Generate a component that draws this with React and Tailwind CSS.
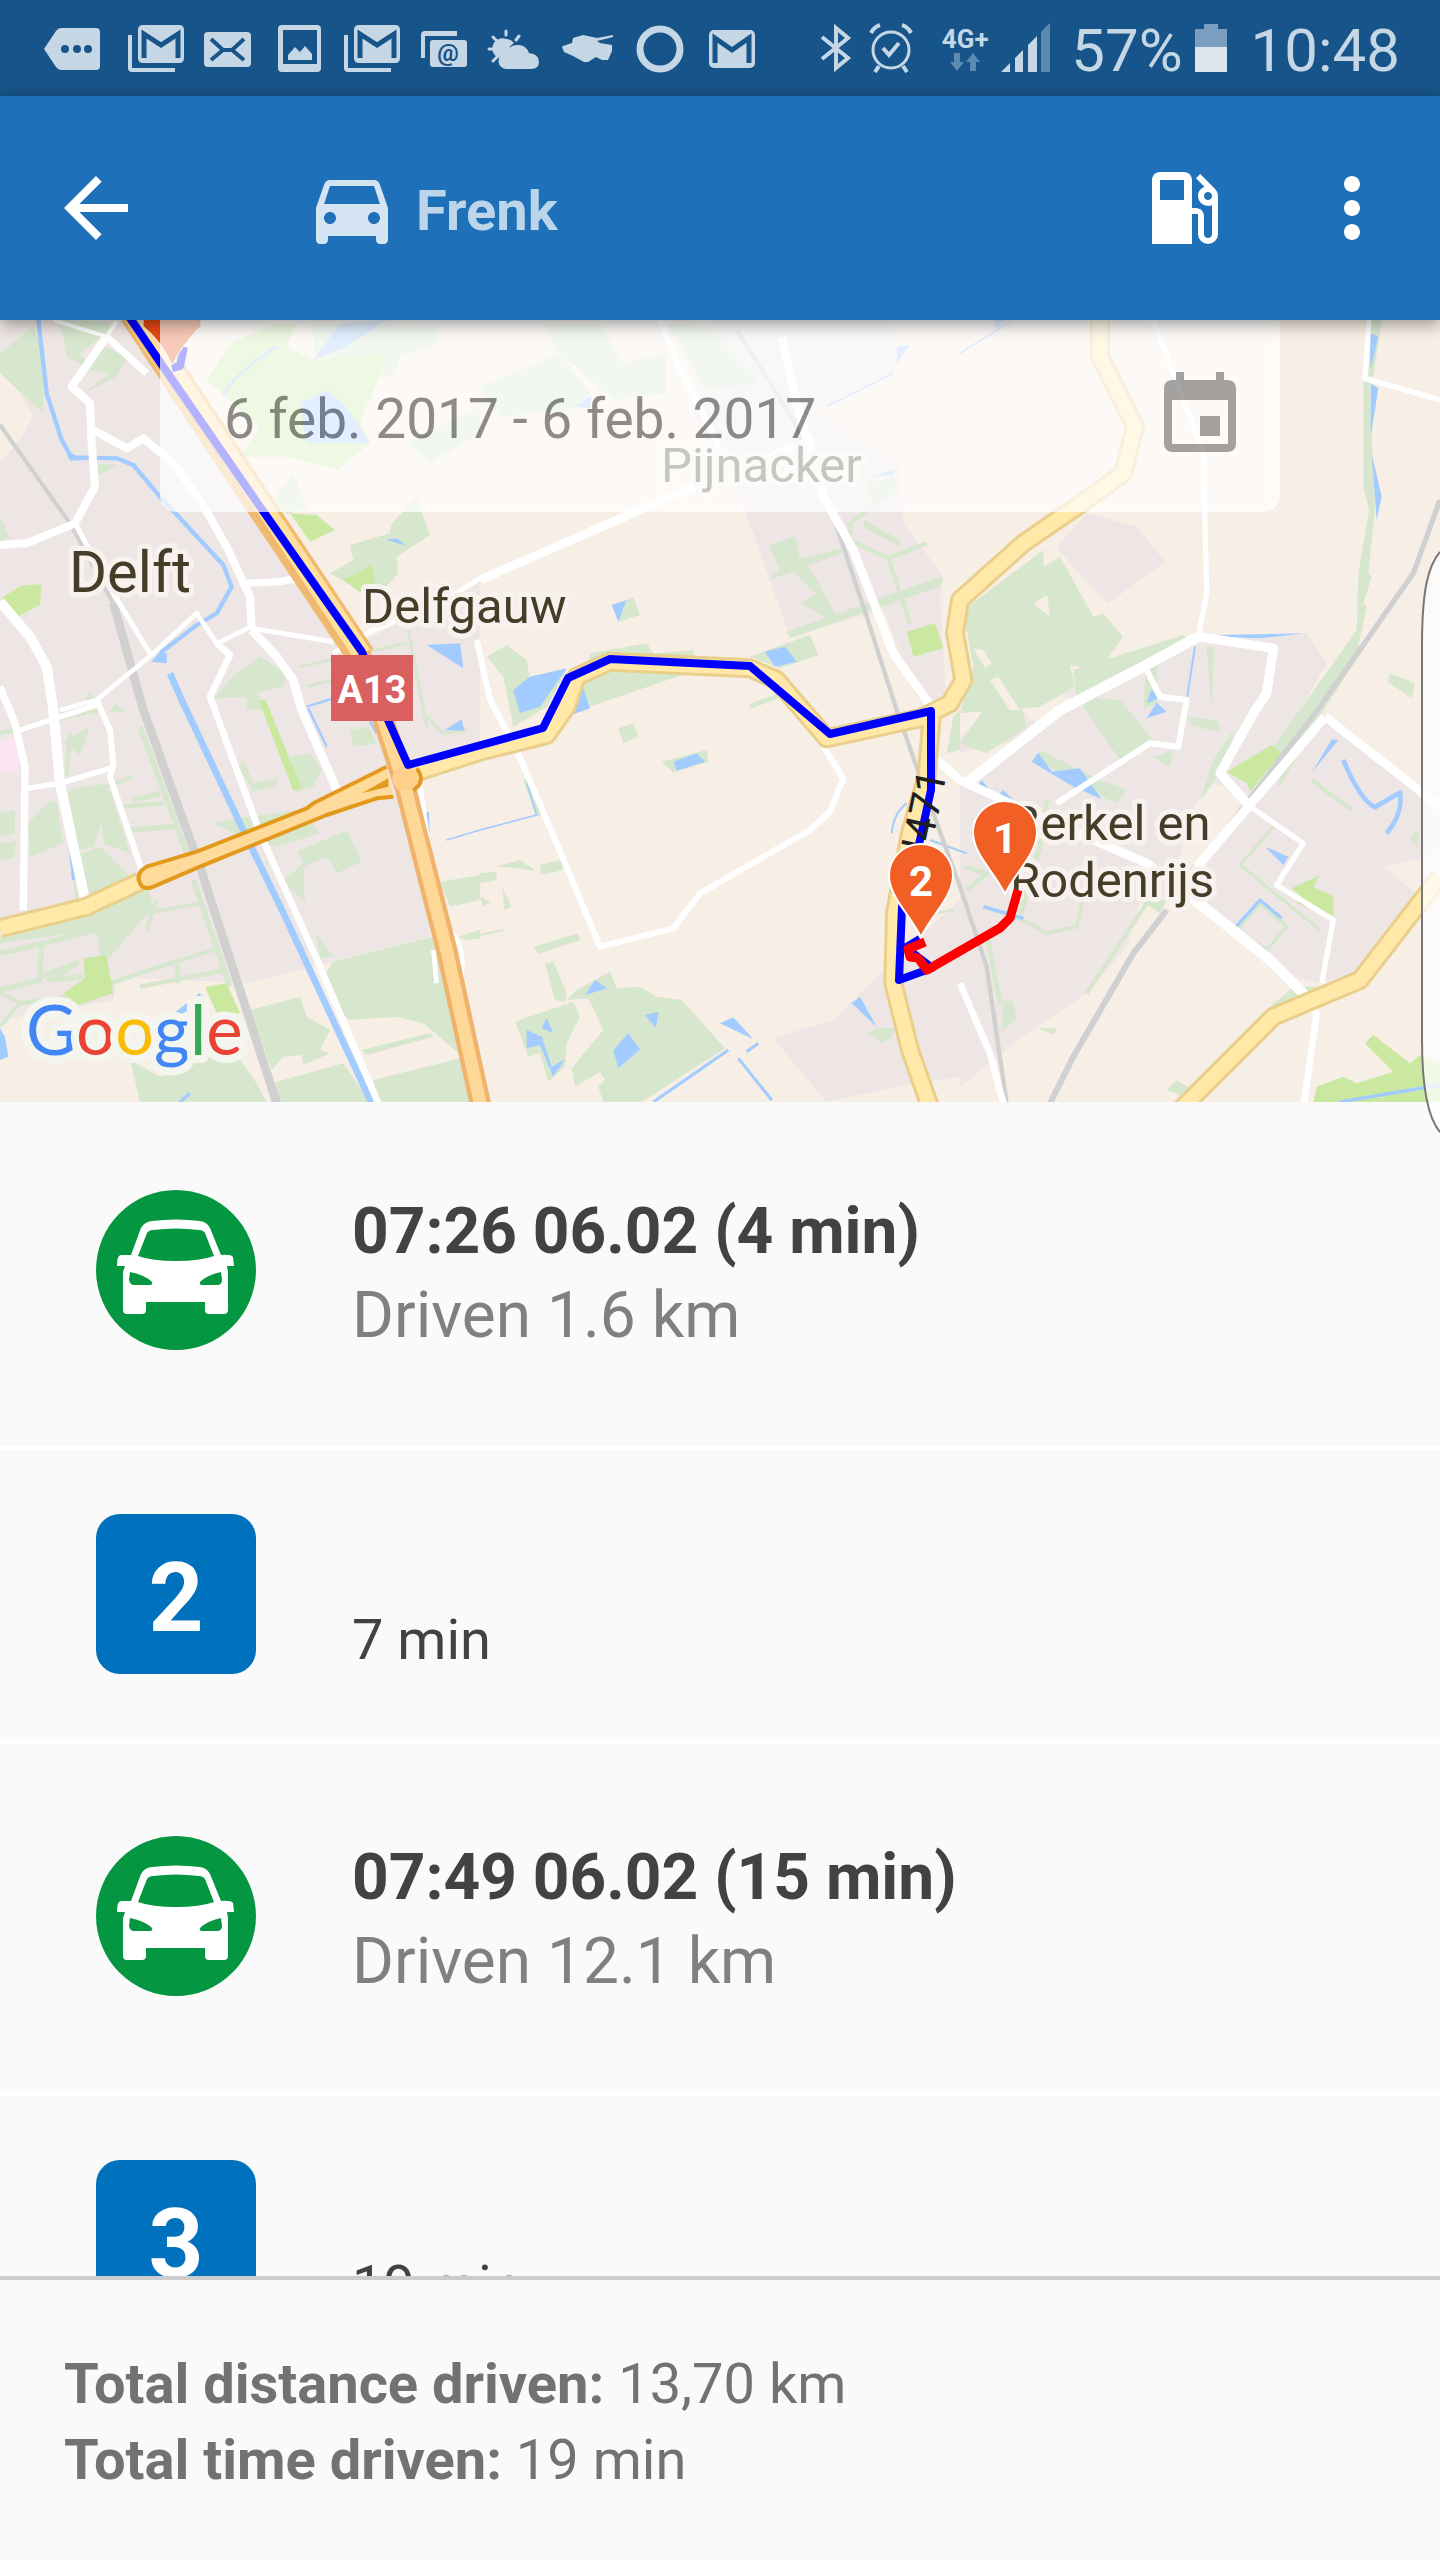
import { MdArrowBack, MdEvent, MdLocalGasStation, MdMoreVert } from 'react-icons/md';

const trips = [
  { id: 1, type: 'drive', title: '07:26 06.02 (4 min)', detail: 'Driven 1.6 km' },
  { id: 2, type: 'stop', number: 2, detail: '7 min' },
  { id: 3, type: 'drive', title: '07:49 06.02 (15 min)', detail: 'Driven 12.1 km' },
  { id: 4, type: 'stop', number: 3, detail: '19 min' },
];

const totals = [
  { label: 'Total distance driven:', value: '13,70 km' },
  { label: 'Total time driven:', value: '19 min' },
];

// Map geometry, drawn in a 4320 x 3306 space
const urban = [
  '0,960 480,960 800,1500 1080,1930 1440,1740 1440,2240 1240,2330 1290,2810 740,2950 350,2930 340,3000 0,3060',
  '2130,960 2680,960 2680,1120 2440,1230 2700,1400 2710,1570 2830,1730 2820,1790 2840,2120 2750,2090 2650,1830 2370,1910 2210,1460 2080,1250',
  '2320,3115 2500,3060 2680,2880 2880,2700 2880,3230 2690,3260 2480,3306',
  '3170,1640 3260,1540 3410,1580 3495,1685 3325,1810 3235,1720',
  '3150,2070 3440,2000 3600,1915 3920,1900 3980,1990 3900,2130 3300,2130',
  '2880,2360 2940,2300 3260,2100 3980,2100 3970,2140 4260,2360 4320,2440 4320,2580 4150,2600 4320,2700 4070,2920 3960,2950 3880,2930 3710,2820 3600,2700 3420,2710 3380,2840 3260,2980 3080,3100 2880,3260',
  '3020,2090 2880,2210 2880,2260 3140,2200',
];

const fields = [
  '0,1080 100,1250 60,1320 0,1390',
  '3640,2350 3710,2370 3740,2420 3600,2590 3530,2600 3580,2420',
  '4150,2600 4320,2560 4320,2700 4260,2690',
];

const greens = [
  '0,1060 100,980 130,1050 130,1240 0,1120',
  '170,960 330,965 320,1000 240,1060 270,1100 310,1040 385,1070 350,1130 250,1180 330,1120 270,1110 200,1070 190,1010',
  '290,1390 350,1395 290,1430',
  '0,1550 30,1615 0,1620',
  '930,970 1310,980 1310,1035 1200,1070 1180,1130 950,1080',
  '820,1500 880,1420 920,1530 860,1540',
  '1220,1330 1440,1220 1440,1300 1290,1390',
  '1050,1635 1170,1600 1175,1570 1250,1495 1290,1605 1190,1670 1195,1720 1140,1780 1060,1760 990,1720 1060,1680',
  '710,2020 780,1970 860,2020 850,2060 770,2080 800,2130 740,2130 740,2090 640,2095',
  '265,2070 290,2100 255,2100',
  '330,2135 345,2108 378,2135',
  '0,2440 45,2430 45,2500 0,2510',
  '0,2530 50,2520 40,2575 0,2580',
  '85,2470 150,2400 170,2410 190,2530 90,2570',
  '190,2225 270,2180 240,2265',
  '205,2370 300,2350 310,2450 280,2540 212,2560',
  '300,2370 330,2370 390,2560 310,2530',
  '215,2570 300,2540 400,2640 440,2650 460,2720 330,2870 300,2870 290,2790 0,2830 0,2810 230,2740',
  '640,2470 740,2450 900,2430 960,2500 830,2540 700,2500',
  '890,2555 1040,2490 1085,2585 1010,2620 980,2570 910,2600 915,2710 850,2640 910,2590',
  '730,2280 760,2350 830,2335 830,2355 760,2375 715,2300',
  '870,2270 930,2260 965,2310 940,2360 890,2375',
  '1050,2190 1105,2180 1130,2230 1060,2240',
  '970,2930 1000,2885 1300,2810 1320,2870 1400,3180 1270,3070 1190,3050 1050,3060 1000,3020',
  '750,3030 900,2990 920,3050 990,3090 960,3150 990,3160 910,3195 905,3165 850,3170 815,3210',
  '830,3245 1030,3190 1110,3306 820,3306',
  '1085,3150 1290,3100 1300,3110 1100,3165',
  '1120,3240 1400,3170 1430,3306 1130,3306',
  '390,3180 480,3230 600,3180 700,3150 770,3250 800,3306 420,3306',
  '950,2800 1000,2870 960,2875',
  '1320,2645 1440,2625 1440,2700 1350,2720',
  '1370,2810 1440,2790 1440,2815 1400,2820',
  '1630,970 1800,970 1870,1090 2000,1060 2000,1180 1840,1200 1670,1050',
  '1440,1160 1680,1060 1770,1180 1710,1230 1500,1250',
  '2000,970 2120,980 2280,1150 2120,1170',
  '2605,1450 2680,1430 2700,1470 2620,1520',
  '2305,1635 2385,1610 2400,1675 2525,1645 2525,1660 2425,1695 2510,1850 2490,1860 2400,1810 2450,1780 2380,1715 2305,1740 2340,1705',
  '2360,1895 2820,1730 2830,1740 2820,1760 2370,1915',
  '2590,1560 2700,1620 2700,1640 2595,1585',
  '2250,1970 2430,1905 2455,1965 2340,2005',
  '1770,1960 1940,1930 1960,1960 2080,1950 2090,2010 1740,2130',
  '1460,1970 1520,1935 1580,1980 1590,2040 1700,2010 1640,2120 1540,2180 1510,2030',
  '1880,1800 1900,1790 1920,1845 1855,1865',
  '1855,2185 1900,2170 1915,2210 1870,2230',
  '1985,2285 2120,2250 2125,2285 2020,2318',
  '1600,2840 1735,2800 1740,2820 1615,2862',
  '1620,2595 1685,2578 1690,2610 1623,2625',
  '1490,2598 1560,2580 1608,2612',
  '1440,2620 1490,2615 1490,2640 1440,2650',
  '1440,2690 1472,2705 1450,2720',
  '1508,2665 1535,2720 1512,2730',
  '1570,2340 1580,2330 1630,2440 1610,2450',
  '1700,3000 1730,2970 1830,2915 1850,2965 1920,2960 1970,2990 2045,3000 2175,3145 1925,3306 1810,3306 1795,3260 1815,3240 1800,3215 1725,3260 1715,3205 1810,3090 1765,2995',
  '1545,3065 1720,3005 1740,3050 1700,3130 1695,3200 1645,3245 1620,3160 1585,3170',
  '1635,2890 1660,2885 1700,2980 1695,3005 1665,3000',
  '2600,3100 2630,3085 2685,3085 2675,3115 2645,3130',
  '2890,1830 3130,1650 3130,1700 3180,1670 3230,1760 3280,1850 3310,1840 3368,1910 3320,1980 3280,2010 3210,1995 3225,2060 3120,2120 2880,2140 2920,2000',
  '3220,2010 3550,1905 3560,1915 3230,2100',
  '4110,960 4145,960 4120,1130 4105,1130',
  '4090,1145 4108,1145 4125,1530 4105,1720 4115,1730 4090,1810 4100,1820 4075,1940 4095,1940 3970,2130 3840,2360 3820,2240 3900,2130 4070,1890 4075,1720 4108,1530 4090,1460',
  '3230,2090 3360,2100 3460,2220 3360,2280',
  '3560,2150 3650,2160 3665,2195 3580,2180',
  '3600,2400 3640,2280 3700,2190 3690,2280',
  '2880,2230 2950,2130 3060,2100 3080,2180 2960,2260',
  '3460,2270 3520,2250 3510,2300',
  '3430,2130 3440,1960 3470,1960 3470,2110',
  '3620,1940 3630,2080 3637,2110 3640,1940',
  '3120,2250 3300,2340 3380,2370 3350,2410 3280,2380 3110,2280',
  '3420,2700 3500,2700 3480,2740',
  '3010,3000 3040,3005 3050,3060 3005,3090',
  '3115,3085 3170,3085 3160,3105',
  '3500,3270 3530,3240 3570,3265 3550,3290',
  '3810,3020 3880,2960 3960,2960 3900,3000',
  '2860,2150 2880,2130 2880,2250 2840,2260',
  '4170,2020 4245,2050 4235,2095 4163,2045',
  '4240,2500 4260,2490 4250,2540 4230,2520',
];

const limes = [
  '620,1140 690,1030 830,970 890,970 860,1040 940,1080 1160,1060 1140,1130 1080,1260 1110,1330 1010,1410 870,1370 720,1370 780,1280',
  '5,1795 60,1758 125,1752 120,1815 50,1852',
  '870,1540 950,1545 1005,1590 930,1625',
  '1030,1740 1115,1695 1130,1780 1085,1780',
  '250,2875 320,2865 340,2980 235,3015 190,2980 255,2935',
  '615,2960 680,2950 720,3040 650,3040',
  '775,2100 797,2100 905,2365 880,2372',
  '2720,1895 2805,1870 2830,1945 2740,1970',
  '3680,2315 3815,2235 3845,2260 3750,2375 3740,2350',
  '3875,2665 3960,2625 3940,2660 4000,2690 4000,2750 3890,2710 3905,2690',
  '3950,3260 4030,3230 4070,3250 4180,3215 4095,3130 4120,3105 4230,3190 4260,3165 4320,3190 4320,3306 3940,3306',
];

const waters = [
  '900,1210 980,1170 1040,1220 1110,1330 920,1330',
  '940,1080 1020,970 1160,960 1040,1040',
  '1160,1620 1190,1615 1220,1638',
  '1280,1935 1380,1930 1390,2005',
  '1335,2190 1385,2158 1393,2192',
  '455,1985 475,1960 500,1960 500,1990',
  '195,1350 225,1365 260,1380 210,1382',
  '0,3085 15,3110 25,3170 0,3180',
  '470,3080 600,2978 608,3000 490,3080',
  '1540,2070 1590,2030 1700,2005 1620,2120 1560,2140',
  '1710,2080 1750,2065 1770,2125 1700,2150',
  '2295,1955 2355,1940 2390,1985 2325,2000',
  '1835,1815 1880,1800 1855,1865',
  '1720,1220 1775,1185 1770,1225',
  '2690,1040 2730,1035 2690,1090',
  '2610,1430 2690,1408 2680,1425',
  '2020,2285 2090,2260 2115,2285 2030,2312',
  '1580,3090 1625,3110 1655,3200 1695,3178 1660,3230 1620,3135 1580,3145',
  '1625,3085 1640,3055 1660,3100',
  '1840,3150 1885,3100 1920,3148 1855,3205',
  '1935,3045 1975,3035 1968,3085',
  '1755,2985 1785,2940 1822,2965',
  '2160,3070 2200,3052 2260,3118',
  '2555,3010 2580,2990 2630,3080',
  '2980,960 3020,960 2990,990',
  '4110,1000 4135,1010 4112,1110',
  '4112,1150 4135,1165 4112,1310',
  '4115,1360 4145,1490 4130,1560',
  '3645,1905 3910,1900 3780,1915 3700,1912',
  '3095,2285 3115,2258 3155,2315 3240,2305 3305,2398 3220,2360',
  '3440,2110 3455,2068 3475,2095',
  '3440,2155 3470,2108 3500,2135',
  '2930,2360 2945,2340 2965,2365',
  '2990,2390 3010,2370 3040,2400',
  '3795,2540 3865,2570 3850,2595',
  '3935,2318 3995,2218 4015,2220',
];

const streams = [
  { d: 'M115 960 140 1180 185 1320 215 1372 350 1375 400 1395 480 1490 670 1695 695 1760 650 1840 590 1875 480 1960', w: 13 },
  { d: 'M510 2020 545 2100 720 2470 860 2760 1115 3310', w: 20 },
  { d: 'M670 1190 Q690 1130 830 1040', w: 9 },
  { d: 'M208 2500 222 2640', w: 12 },
  { d: 'M920 2120 1000 2095M925 2125 980 2240', w: 7 },
  { d: 'M1110 2165 1130 2200M1283 2435 1285 2500', w: 8 },
  { d: 'M1340 2520 1440 2490M1440 2490 1610 2445 1580 2350', w: 5 },
  { d: 'M1960 3306 2185 3150M2215 3175 2315 3300M2240 3155 2275 3130', w: 9 },
  { d: 'M2675 2500 Q2680 2440 2720 2410M2790 2520 2900 2560', w: 6 },
  { d: 'M2480 1220 2680 1120M2880 1060 3040 960', w: 6 },
  { d: 'M3585 1940 3560 2100', w: 6 },
  { d: 'M2950 2720 3070 2755', w: 10 },
  { d: 'M3710 2778 3780 2700 3845 2755', w: 10 },
  { d: 'M4030 2280 Q4080 2400 4125 2422 4160 2400 4200 2378 4210 2440 4160 2500', w: 14 },
  { d: 'M4020 3306 4320 3255', w: 10 },
  { d: 'M540 3306 570 3280', w: 10 },
];

const hedges = [
  { d: 'M0 2860 130 2830 290 2790M125 2830 120 2940 0 2970M120 2930 230 2890 150 2940 250 2930', w: 16 },
  { d: 'M330 2950 480 2900 640 2850M530 2880 535 2950M420 2960 680 2910', w: 13 },
  { d: 'M390 2490 520 2480M400 2400 480 2380M420 2180 560 2560M580 2640 690 2960', w: 16 },
  { d: 'M0 2200 200 2150 300 2130M200 2330 210 2200M290 2370 400 2330M360 2420 490 2410', w: 14 },
  { d: 'M330 2760 600 2710M440 2790 470 2700', w: 12 },
  { d: 'M0 2980 60 3010 0 3080M60 3010 200 2990', w: 12 },
  { d: 'M900 2000 1220 1930M920 2060 1200 1990M1225 1890 1280 2180M1280 2150 1330 2200 1400 2190', w: 9 },
  { d: 'M2550 1570 2550 1620 2665 1675 2780 1630M2665 1675 2730 1870M2550 1570 2600 1530', w: 13 },
  { d: 'M3820 2480 3720 2595 3960 2790M3710 2790 3780 2710 3860 2780 3800 2850 3710 2790', w: 10 },
  { d: 'M3935 2340 4055 2430', w: 13 },
  { d: 'M3440 2710 3260 2980M2950 2720 3070 2760 3140 2800 3230 2780 3250 2700', w: 12 },
  { d: 'M3140 2400 3120 2540 3060 2750M2890 2600 2960 2620 2900 2670M2960 2800 3000 3010', w: 14 },
  { d: 'M2800 2740 2860 2730', w: 8 },
  { d: 'M2250 2120 2340 2085', w: 14 },
  { d: 'M1440 2805 1510 2790', w: 6 },
];

const rails = [
  { d: 'M0 1275 210 1570 345 1820', w: 12 },
  { d: 'M340 1810 430 2130 600 2600 830 3310', w: 26 },
  { d: 'M2210 990 2380 1260 2500 1550 2600 1850 2690 2130 2760 2330 2880 2660 2960 2900 3020 3310', w: 13 },
  { d: 'M4320 1500 4240 1720 3960 2120 3610 2580', w: 16 },
  { d: 'M3500 2730 3400 2860 3220 3170 3150 3310', w: 18 },
];

const streets = [
  { d: 'M320 1010 215 1160 270 1210 275 1330 285 1460 225 1570 80 1630 0 1635', w: 24 },
  { d: 'M160 960 320 1010 350 965', w: 12 },
  { d: 'M320 1010 440 1120', w: 22 },
  { d: 'M280 1290 380 1345 430 1315 520 1390 600 1500 680 1640 750 1790 755 1880', w: 24 },
  { d: 'M735 1750 840 1745 890 1735', w: 22 },
  { d: 'M755 1885 1000 1925M1000 1960 1120 1890 1320 1810 1440 1735', w: 15 },
  { d: 'M1440 1740 2080 1460 2440 1320', w: 26 },
  { d: 'M225 1570 280 1670 340 1780 450 1960', w: 15 },
  { d: 'M0 1805 90 1910 140 2000 160 2130 180 2350 255 2700', w: 30 },
  { d: 'M180 2130 290 2100 460 1960 590 1840 650 1930 755 1880', w: 14 },
  { d: 'M650 1930 690 1965 630 2090 780 2500 960 2900 1135 3310', w: 20 },
  { d: 'M755 1890 830 1970 880 2040 905 2130 1015 2380', w: 26 },
  { d: 'M60 2190 290 2115M80 2365 180 2350 330 2305', w: 16 },
  { d: 'M0 2060 45 2170 75 2300 70 2730', w: 22 },
  { d: 'M290 2100 330 2190 340 2290 330 2330 425 2610', w: 18 },
  { d: 'M1262 2360 1282 2510M1310 2770 Q1400 2800 1385 2930M1300 2850 1310 2950', w: 14 },
  { d: 'M1430 1920 1470 2100 1550 2250 1670 2530 1800 2840 2020 2785 2100 2680 2430 2490 2490 2435 2530 2335 2470 2240', w: 18 },
  { d: 'M1980 960 2040 1110 2090 1200 2160 1350', w: 18 },
  { d: 'M2345 1010 2390 1210 2470 1490 2560 1650 2680 1960 2780 2100 2820 2150', w: 26 },
  { d: 'M3460 960 3520 1120 3610 1360 3620 1780 3595 1910', w: 16 },
  { d: 'M3595 1910 3430 2000 3180 2130 2900 2350', w: 32 },
  { d: 'M3595 1910 3820 1945 3800 2080 3760 2140 3660 2320 3750 2420', w: 28 },
  { d: 'M3440 2010 3480 2090 3560 2100 3535 2240 3450 2230 3170 2410', w: 18 },
  { d: 'M4107 960 4095 1135 4320 1200', w: 16 },
  { d: 'M2800 2270 2880 2340 3030 2410 3440 2590 3540 2660', w: 26 },
  { d: 'M3560 2680 3810 2880 3920 2990', w: 32 },
  { d: 'M3910 2990 3950 3040 3912 3310', w: 20 },
  { d: 'M3750 2420 3910 2530 3830 2655 4000 2760 3965 2950', w: 16 },
  { d: 'M3975 2150 3600 2590 3580 2680', w: 28 },
  { d: 'M3975 2150 4320 2420', w: 26 },
  { d: 'M2880 2950 2970 3160 3010 3310', w: 20 },
];

const mainRoads = [
  'M0 2785 260 2720 420 2645',
  'M1240 2320 1440 2255 1640 2205 1700 2120 1730 2030 1830 1985 2250 2005 2330 2040 2480 2215 2760 2155 2850 2110 2890 2040 2865 1900 2880 1800 3070 1630 3230 1520 3370 1420 3405 1280 3300 1070 3300 940',
  'M2795 2150 2780 2330 2730 2500 2685 2740 2680 2950 2730 3150 2790 3320',
  'M3520 3350 3820 3050 4080 2940 4320 2630',
];

const appIconFill = '#c5d7e5';

function StatusIcon({ children, className = '' }) {
  return (
    <svg viewBox="0 0 72 96" fill={appIconFill} className={`h-24 w-18 ${className}`} aria-hidden="true">
      {children}
    </svg>
  );
}

function GmailStack() {
  return (
    <StatusIcon>
      <path d="M8 35h4v33h43v4H12q-4 0-4-4z" />
      <path d="M23 25h36q5 0 5 5v28q0 5-5 5H23q-5 0-5-5V30q0-5 5-5z" />
      <path d="M24 58V34l17 11 17-11v24" fill="none" stroke="#17548a" strokeWidth="5" />
    </StatusIcon>
  );
}

function StatusBar() {
  return (
    <div className="flex h-24 shrink-0 items-center justify-between bg-[#17548a] pl-9 pr-10 text-[#c5d7e5]">
      <div className="flex items-center">
        <StatusIcon className="mr-3">
          <path d="M25 28h35q4 0 4 4v34q0 4-4 4H25q-3 0-5-3L8 49l12-18q2-3 5-3z" />
          <g fill="#17548a">
            <circle cx="29" cy="49" r="4" />
            <circle cx="41" cy="49" r="4" />
            <circle cx="52" cy="49" r="4" />
          </g>
        </StatusIcon>
        <GmailStack />
        <StatusIcon>
          <rect x="12" y="32" width="47" height="35" rx="4" />
          <path d="M19 39l12 11h9l12-11M19 60l12-10M52 60L40 50" fill="none" stroke="#17548a" strokeWidth="4" />
        </StatusIcon>
        <StatusIcon>
          <path fillRule="evenodd" d="M18 25h35q4 0 4 4v39q0 4-4 4H18q-4 0-4-4V29q0-4 4-4zM19 30v34h34V30z" />
          <path d="M24 60v-5l7-8 5 5 5-6 7 8v6z" />
        </StatusIcon>
        <GmailStack />
        <StatusIcon>
          <path d="M13 58V35q0-4 4-4h32v5H17v22z" />
          <rect x="22" y="40" width="37" height="27" rx="3" />
          <text x="40" y="61" textAnchor="middle" fontSize="24" fontWeight="700" fill="#17548a">@</text>
        </StatusIcon>
        <StatusIcon>
          <path d="M26 39a10 10 0 018 4q-5 3-7 10-5 1-8 5a10 10 0 017-19z" />
          <path d="M26 31v4M13 37l3 3M39 36l-3 4M9 49h4M13 61l4-4" fill="none" stroke={appIconFill} strokeWidth="3" strokeLinecap="round" />
          <path d="M27 69a8 8 0 01-1-16q3-8 12-8 8 0 11 8 10 1 10 9 0 7-8 7z" />
        </StatusIcon>
        <StatusIcon>
          <path d="M11 46l9-3 1-5 10-3 14 3 16-3v2l-16 4 3 2 12 2v6l-4 9h-6l-6-3-8 5h-4l-11-6-9-4-2-5z" />
        </StatusIcon>
        <StatusIcon>
          <circle cx="36" cy="49" r="20" fill="none" stroke={appIconFill} strokeWidth="7" />
        </StatusIcon>
        <StatusIcon>
          <rect x="13" y="30" width="46" height="38" rx="5" />
          <path d="M19 63V38l17 12 17-12v25" fill="none" stroke="#17548a" strokeWidth="5" />
        </StatusIcon>
      </div>

      <div className="flex items-center">
        <svg viewBox="0 0 34 50" fill="none" stroke={appIconFill} strokeWidth="4" className="h-[50px] w-[34px]" aria-hidden="true">
          <path d="M3 14l26 21-12 10V5l12 10L3 36" />
        </svg>
        <svg viewBox="0 0 44 50" fill="none" stroke={appIconFill} strokeWidth="3" className="ml-4 h-[50px] w-11" aria-hidden="true">
          <circle cx="22" cy="27" r="18" />
          <path d="M14 25l6 7 10-12" strokeWidth="4" />
          <path d="M2 10q3-6 9-8M42 10q-3-6-9-8M10 43l-4 6M34 43l4 6" strokeWidth="4" />
        </svg>
        <div className="ml-6 flex w-14 flex-col items-center">
          <span className="text-[26px] leading-7 font-bold">4G+</span>
          <svg viewBox="0 0 30 18" fill="#5d8ab0" className="h-[18px] w-[30px]" aria-hidden="true">
            <path d="M4 0h6v9h4l-7 9-7-9h4zM20 18h6V9h4l-7-9-7 9h4z" />
          </svg>
        </div>
        <svg viewBox="0 0 50 50" fill={appIconFill} className="ml-2 h-[50px] w-[50px]" aria-hidden="true">
          <path d="M0 49l9-9v9zM14 35l8-8v22h-8zM27 22l9-9v36h-9z" />
          <path d="M40 9l9-9v49h-9z" fill="#5d8ab0" />
        </svg>
        <span className="ml-5 pt-1.5 text-[60px] leading-[70px]">57%</span>
        <svg viewBox="0 0 32 48" className="ml-3 h-12 w-8" aria-hidden="true">
          <path d="M9 0h14v5h9v18H0V5h9z" fill="#7b9dbf" />
          <path d="M0 23h32v25H0z" fill="#dce5ee" />
        </svg>
        <span className="ml-6 pt-1.5 text-[60px] leading-[70px]">10:48</span>
      </div>
    </div>
  );
}

function Toolbar() {
  return (
    <header className="relative z-10 flex h-56 shrink-0 items-center bg-[#1e70b9] px-12 pr-10 text-white shadow-[0_4px_16px_rgba(0,0,0,0.4)]">
      <button type="button" aria-label="Back">
        <MdArrowBack className="size-24" />
      </button>
      <h1 className="ml-40 flex items-center gap-4 text-[56px] font-bold text-[#bcd5ea]">
        <svg viewBox="0 0 24 24" fill="#d5e4f2" className="size-24" aria-hidden="true">
          <path d="M18.92 6.01C18.72 5.42 18.16 5 17.5 5h-11c-.66 0-1.21.42-1.42 1.01L3 12v8c0 .55.45 1 1 1h1c.55 0 1-.45 1-1v-1h12v1c0 .55.45 1 1 1h1c.55 0 1-.45 1-1v-8l-2.08-5.99zM6.5 16c-.83 0-1.5-.67-1.5-1.5S5.67 13 6.5 13s1.5.67 1.5 1.5S7.33 16 6.5 16zm11 0c-.83 0-1.5-.67-1.5-1.5s.67-1.5 1.5-1.5 1.5.67 1.5 1.5-.67 1.5-1.5 1.5zM5 11l1.500-4.500h11L19 11H5z" />
        </svg>
        <span className="pt-1.5">Frenk</span>
      </h1>
      <button type="button" aria-label="Fuel" className="ml-auto">
        <MdLocalGasStation className="size-24" />
      </button>
      <button type="button" aria-label="More options" className="ml-18">
        <MdMoreVert className="size-24" />
      </button>
    </header>
  );
}

function Strokes({ lines, color }) {
  return (
    <g fill="none" stroke={color} strokeLinejoin="round">
      {lines.map((line) => (
        <path key={line.d} d={line.d} strokeWidth={line.w} />
      ))}
    </g>
  );
}

function Areas({ shapes, color }) {
  return (
    <g fill={color}>
      {shapes.map((points) => (
        <polygon key={points} points={points} />
      ))}
    </g>
  );
}

function Terrain() {
  return (
    <svg x="0" y="320" width="1440" height="782" viewBox="0 960 4320 2346">
      <rect y="960" width="4320" height="2346" fill="#f7eee5" />
      <Areas shapes={urban} color="#eee6e5" />
      <Areas shapes={fields} color="#f7eee5" />
      <polygon points="0,2230 50,2205 60,2310 0,2320" fill="#fce5f3" />
      <Areas shapes={greens} color="#d6e7cd" />
      <Strokes lines={hedges} color="#d6e7cd" />
      <Areas shapes={limes} color="#cbe8a1" />
      <Areas shapes={['3100,1810 3142,1785 3150,1850', '2920,1945 2950,1950 2975,1990 2955,2005', '2970,2040 2995,2030 3060,2130 3030,2130']} color="#f7eee5" />
      <Areas shapes={waters} color="#a2cbff" />
      <Strokes lines={streams} color="#a2cbff" />
      <Strokes lines={rails} color="#d0d0d0" />
      <Strokes lines={streets} color="#ffffff" />

      <g fill="none" strokeLinejoin="round">
        {mainRoads.map((d) => (
          <path key={d} d={d} stroke="#e9cf8b" strokeWidth="60" />
        ))}
        {mainRoads.map((d) => (
          <path key={d} d={d} stroke="#ffe8a8" strokeWidth="42" />
        ))}
        {/* Motorway */}
        <path d="M400 940 790 1530 1085 1970" stroke="#efb970" strokeWidth="86" />
        <path d="M400 940 790 1530 1085 1970" stroke="#ffdf9e" strokeWidth="66" />
        <path d="M372 940 765 1540 1050 1970" stroke="#efb970" strokeWidth="14" />
        <path d="M1080 1960 1160 2190 1215 2360 1340 2850 1445 3330" stroke="#efb36c" strokeWidth="64" />
        <path d="M1080 1960 1160 2190 1215 2360 1340 2850 1445 3330" stroke="#ffd796" strokeWidth="38" />
        <path
          d="M1160 2300 940 2410 920 2425 590 2555 440 2600Q405 2620 420 2650 430 2672 460 2660L600 2600 980 2445 1130 2395 1180 2390"
          fill="#ffdb9b"
          stroke="#e39a1c"
          strokeWidth="12"
        />
        <path d="M1085 2380 1165 2335V2360z" fill="#e39a1c" />
        <path d="M1250 2305Q1280 2345 1240 2370" stroke="#e39a1c" strokeWidth="12" />
        <circle cx="1215" cy="2335" r="38" fill="#ffd08c" />
      </g>
    </svg>
  );
}

function Pin({ x, y, label }) {
  return (
    <g>
      <path
        d={`M${x} ${y}c-18 0-32 14-32 31 0 22 20 38 32 62 12-24 32-40 32-62 0-17-14-31-32-31z`}
        fill="#f15f25"
        stroke="#ffffff"
        strokeWidth="2"
      />
      <text x={x} y={y + 52} textAnchor="middle" fontSize="42" fontWeight="700" fill="#ffffff">
        {label}
      </text>
    </g>
  );
}

function TripMap() {
  return (
    <svg
      viewBox="0 320 1440 782"
      className="block aspect-[1440/782] w-full"
      role="img"
      aria-label="Map of the driven route"
    >
      <Terrain />

      {/* Place names */}
      <g fill="#453d28" stroke="#f8f2ee" strokeWidth="10" strokeLinejoin="round" paintOrder="stroke" fontSize="49">
        <text x="69" y="592" fontSize="58">Delft</text>
        <text x="362" y="623">Delfgauw</text>
        <text x="661" y="482">Pijnacker</text>
        <text x="1010" y="840">Berkel en</text>
        <text x="1010" y="897">Rodenrijs</text>
      </g>

      {/* Driven routes */}
      <g fill="none" strokeWidth="8" strokeLinejoin="round">
        <path d="M130 318 160 362 263 511 362 652 388 720 408 765 543 728 568 678 610 659 750 666 830 734 931 711 931 790 920 840 902 907 899 980 932 968 914 954 905 948 920 939" stroke="#0000ff" />
        <path d="M184 347 180 366 172 368" stroke="#0000ff" />
        <path d="M1018 890 1010 918 1000 928 927 970 918 958 910 957 908 949 925 942" stroke="#ff0000" strokeWidth="9" />
      </g>
      <text transform="translate(926 872) rotate(-78)" fontSize="42" fill="#1f1f1f">N471</text>

      <path d="M172 365Q162 342 143 326V312H201V326Q184 342 172 365z" fill="#e64a12" stroke="#ffffff" strokeWidth="1" />
      <rect x="331" y="655" width="82" height="66" fill="#d9605f" />
      <text x="372" y="703" textAnchor="middle" fontSize="38" fontWeight="700" fill="#ffffff">A13</text>
      <Pin x={1005} y={801} label="1" />
      <Pin x={921} y={844} label="2" />

      <text
        x="26"
        y="1055"
        className="font-['Lato',sans-serif]"
        fontSize="69"
        stroke="#f4f5ee"
        strokeWidth="16"
        strokeLinejoin="round"
        paintOrder="stroke"
      >
        <tspan fill="#4285f4">G</tspan>
        <tspan fill="#ea4335">o</tspan>
        <tspan fill="#fbbc05">o</tspan>
        <tspan fill="#4285f4">g</tspan>
        <tspan fill="#34a853">l</tspan>
        <tspan fill="#ea4335">e</tspan>
      </text>
    </svg>
  );
}

function DriveIcon() {
  return (
    <svg viewBox="0 0 160 160" className="size-40 shrink-0" aria-hidden="true">
      <circle cx="80" cy="80" r="80" fill="#049640" />
      <path
        d="M56 31Q80 28 104 31 111 32 114 38L125 65Q135 64 137 67L138 76H131L132 82V120Q132 124 128 124H113Q109 124 109 120V112H50V120Q50 124 46 124H31Q27 124 27 120V82L29 76H21Q21 65 25 65L35 65 45 38Q48 32 56 31Z"
        fill="#ffffff"
      />
      <path
        d="M57 40Q80 37 103 40 107 40 109 43L118 66Q104 71 80 71 56 71 42 66L51 43Q53 40 57 40ZM34 82Q49 85 56 92 57 95 54 95H38Q34 95 33 90ZM125 82Q111 85 104 92 103 95 106 95H121Q126 95 126 90Z"
        fill="#049640"
      />
    </svg>
  );
}

function TripItem({ trip }) {
  if (trip.type === 'drive') {
    return (
      <li className="flex items-start gap-24 border-b-4 border-white px-24 pt-23 pb-22 first:pt-22">
        <DriveIcon />
        <div className="text-[64px] leading-[84px]">
          <h2 className="font-bold text-[#424242]">{trip.title}</h2>
          <p className="text-[#808080]">{trip.detail}</p>
        </div>
      </li>
    );
  }

  return (
    <li className="flex items-end gap-24 border-b-4 border-white px-24 pt-16 pb-[66px]">
      <div className="flex size-40 shrink-0 items-center justify-center rounded-3xl bg-[#0071bd] pt-2 text-[96px] font-bold text-white">
        {trip.number}
      </div>
      <p className="text-[56px] leading-[68px] text-[#424242]">{trip.detail}</p>
    </li>
  );
}

function App() {
  return (
    <div className="relative flex h-screen flex-col overflow-hidden bg-[#fafafa] font-['Roboto',sans-serif]">
      <StatusBar />
      <Toolbar />

      <section className="relative shrink-0">
        <TripMap />
        <button
          type="button"
          className="absolute inset-x-40 top-0 flex h-48 items-center justify-between rounded-b-2xl bg-white pr-8 pl-16 text-[55px] text-[#616161] opacity-70"
        >
          <span className="pt-1.5">6 feb. 2017 - 6 feb. 2017</span>
          <MdEvent className="size-24 text-[#808080]" />
        </button>
      </section>

      <ul className="min-h-0 flex-1 overflow-hidden">
        {trips.map((trip) => (
          <TripItem key={trip.id} trip={trip} />
        ))}
      </ul>

      <footer className="shrink-0 border-t-4 border-[#cccccc] px-16 pt-[66px] pb-[62px] text-[56px] leading-[76px] text-[#727272]">
        {totals.map((total) => (
          <p key={total.label}>
            <strong className="font-bold">{total.label}</strong> {total.value}
          </p>
        ))}
      </footer>

      {/* Edge panel handle */}
      <svg viewBox="0 0 20 584" className="absolute top-[550px] right-0 z-20 h-[584px] w-5" aria-hidden="true">
        <path d="M20 2C8 16 2 40 2 96V490C2 540 8 568 20 582" fill="#ffffff" fillOpacity="0.75" stroke="#777777" strokeWidth="2" />
      </svg>
    </div>
  );
}

export default App;
